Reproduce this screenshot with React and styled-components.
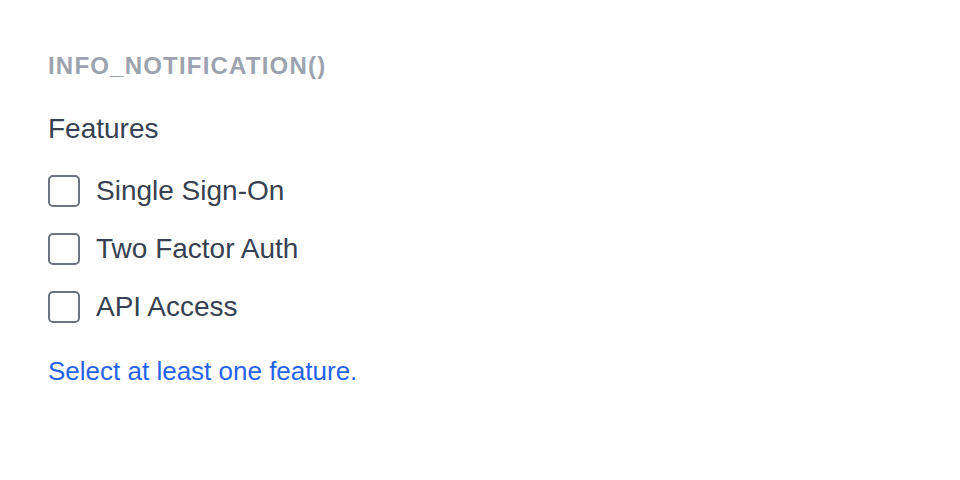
import React from 'react';
import styled, { createGlobalStyle } from 'styled-components';

const GlobalStyle = createGlobalStyle`
  body {
    margin: 0;
    background: #ffffff;
    font-family: "Liberation Sans", Arial, sans-serif;
  }
`;

const Page = styled.div`
  padding: 48px;
  display: flex;
  flex-direction: column;
  align-items: flex-start;
`;

const Title = styled.h2`
  margin: 0 0 24px;
  font-size: 24px;
  line-height: 36px;
  font-weight: 700;
  letter-spacing: 0.05em;
  text-transform: uppercase;
  color: #9ca3af;
`;

const Fieldset = styled.fieldset`
  margin: 0;
  padding: 0;
  border: 0;
  display: flex;
  flex-direction: column;
  gap: 16px;
`;

const Legend = styled.legend`
  padding: 0;
  margin-bottom: 20px;
  font-size: 28px;
  line-height: 42px;
  color: #374151;
`;

const Option = styled.label`
  display: flex;
  align-items: center;
  gap: 16px;
  font-size: 28px;
  line-height: 42px;
  color: #374151;
  cursor: pointer;
`;

const Box = styled.input.attrs({ type: 'checkbox' })`
  appearance: none;
  margin: 0;
  width: 32px;
  height: 32px;
  border: 2px solid #6b7280;
  border-radius: 5px;
  background: #fff;
  flex-shrink: 0;
`;

const Hint = styled.p`
  margin: 24px 0 0;
  font-size: 26px;
  line-height: 39px;
  color: #2563eb;
`;

const features = ['Single Sign-On', 'Two Factor Auth', 'API Access'];

export default function App() {
  return (
    <>
      <GlobalStyle />
      <Page>
        <Title>info_notification()</Title>
        <Fieldset>
          <Legend>Features</Legend>
          {features.map((f) => (
            <Option key={f}>
              <Box />
              {f}
            </Option>
          ))}
        </Fieldset>
        <Hint>Select at least one feature.</Hint>
      </Page>
    </>
  );
}
